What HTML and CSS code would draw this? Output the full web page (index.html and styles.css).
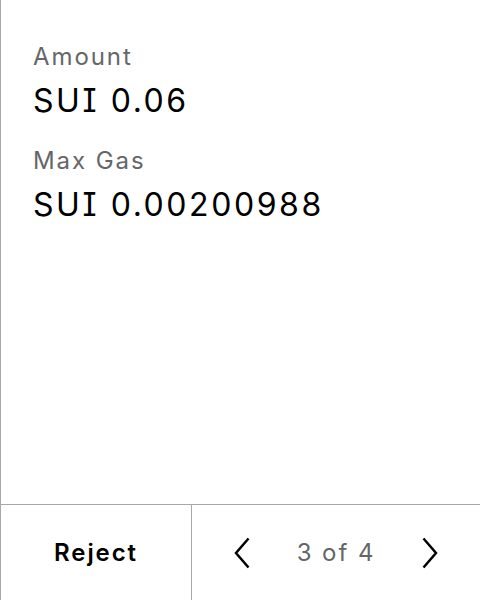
FILE: index.html
```html
<!DOCTYPE html>
<html>
<head>
<meta charset="utf-8">
<link rel="stylesheet" href="styles.css">
</head>
<body>
<div class="screen">
  <div class="content">
    <div class="field">
      <div class="label">Amount</div>
      <div class="value">SUI 0.06</div>
    </div>
    <div class="field">
      <div class="label">Max Gas</div>
      <div class="value">SUI 0.00200988</div>
    </div>
  </div>
  <div class="footer">
    <div class="reject">Reject</div>
    <div class="nav">
      <svg class="chev" width="16" height="32" viewBox="0 0 16 32"><path d="M14.5 1.5 L2 16 L14.5 30.5" fill="none" stroke="#000" stroke-width="2.5"/></svg>
      <span class="pager">3 of 4</span>
      <svg class="chev" width="16" height="32" viewBox="0 0 16 32"><path d="M1.5 1.5 L14 16 L1.5 30.5" fill="none" stroke="#000" stroke-width="2.5"/></svg>
    </div>
  </div>
</div>
</body>
</html>
```
FILE: styles.css
```css
html, body {
  margin: 0;
  padding: 0;
  background: #fff;
}
body {
  font-family: Inter, "Noto Sans", sans-serif;
  font-feature-settings: "cv08";
  color: #000;
}
.screen {
  width: 479px;
  height: 600px;
  border-left: 1px solid #a8a8a8;
  display: flex;
  flex-direction: column;
}
.content {
  flex: 1;
  padding: 41px 0 0 32px;
  display: flex;
  flex-direction: column;
  gap: 24px;
}
.field {
  display: flex;
  flex-direction: column;
  gap: 8px;
}
.label {
  font-size: 24px;
  line-height: 32px;
  letter-spacing: 0.08em;
  color: #666;
}
.value {
  font-size: 32px;
  line-height: 40px;
  letter-spacing: 0.08em;
  color: #000;
}
.footer {
  height: 95px;
  border-top: 1px solid #a8a8a8;
  display: flex;
}
.reject {
  width: 190px;
  border-right: 1px solid #a8a8a8;
  display: flex;
  align-items: center;
  justify-content: center;
  font-size: 24px;
  font-weight: 600;
  letter-spacing: 0.08em;
}
.nav {
  flex: 1;
  display: flex;
  align-items: center;
  justify-content: space-between;
  padding: 0 42px 0 42px;
}
.pager {
  font-size: 24px;
  letter-spacing: 0.08em;
  color: #666;
}
.chev {
  display: block;
}
```
